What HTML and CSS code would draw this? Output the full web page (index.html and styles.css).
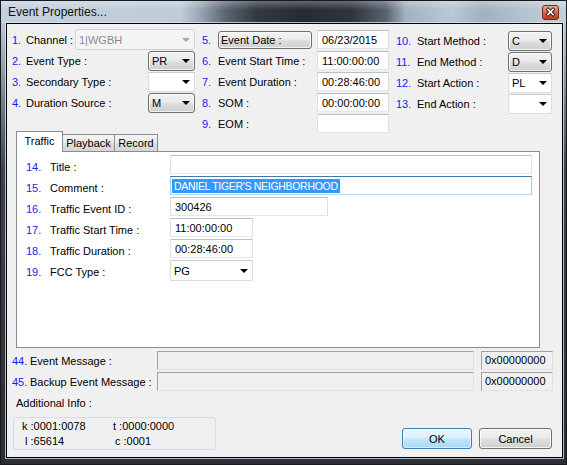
FILE: index.html
```html
<!DOCTYPE html>
<html>
<head>
<meta charset="utf-8">
<title>Event Properties</title>
<link rel="stylesheet" href="styles.css">
</head>
<body>
<div class="window">
  <div class="titlebar">
    <span class="title">Event Properties...</span>
    <span class="close">
      <svg width="17" height="15" viewBox="0 0 17 15">
        <defs>
          <linearGradient id="cg" x1="0" y1="0" x2="0" y2="1">
            <stop offset="0" stop-color="#eeb2a2"/>
            <stop offset="0.45" stop-color="#d96d52"/>
            <stop offset="1" stop-color="#c2391a"/>
          </linearGradient>
        </defs>
        <rect x="0.5" y="0.5" width="16" height="14" rx="2.5" fill="url(#cg)" stroke="#6e2c1e"/>
        <path d="M6 4.5l5 5M11 4.5l-5 5" stroke="#3b1a12" stroke-width="3.4" stroke-linecap="square"/>
        <path d="M6 4.5l5 5M11 4.5l-5 5" stroke="#ffffff" stroke-width="1.6" stroke-linecap="square"/>
      </svg>
    </span>
  </div>
  <div class="frame">
    <div class="client">
      <div class="top">
        <div class="col col1">
          <div class="row"><span class="num">1.</span><span class="lbl">Channel :</span><div class="combo disabled w120 h21"><span class="val">1|WGBH</span><span class="arrow"></span></div></div>
          <div class="row"><span class="num">2.</span><span class="lbl">Event Type :</span><div class="combo raised w47"><span class="val">PR</span><span class="arrow"></span></div></div>
          <div class="row"><span class="num">3.</span><span class="lbl">Secondary Type :</span><div class="combo flat w47"><span class="val"></span><span class="arrow"></span></div></div>
          <div class="row"><span class="num">4.</span><span class="lbl">Duration Source :</span><div class="combo raised w47"><span class="val">M</span><span class="arrow"></span></div></div>
        </div>
        <div class="col col2">
          <div class="row"><span class="num">5.</span><span class="button datebtn">Event Date :</span><span class="textbox w72">06/23/2015</span></div>
          <div class="row"><span class="num">6.</span><span class="lbl">Event Start Time :</span><span class="textbox w72">11:00:00:00</span></div>
          <div class="row"><span class="num">7.</span><span class="lbl">Event Duration :</span><span class="textbox w72">00:28:46:00</span></div>
          <div class="row"><span class="num">8.</span><span class="lbl">SOM :</span><span class="textbox w72">00:00:00:00</span></div>
          <div class="row"><span class="num">9.</span><span class="lbl">EOM :</span><span class="textbox w72"></span></div>
        </div>
        <div class="col col3">
          <div class="row"><span class="num">10.</span><span class="lbl">Start Method :</span><div class="combo raised w44"><span class="val">C</span><span class="arrow"></span></div></div>
          <div class="row"><span class="num">11.</span><span class="lbl">End Method :</span><div class="combo raised w44"><span class="val">D</span><span class="arrow"></span></div></div>
          <div class="row"><span class="num">12.</span><span class="lbl">Start Action :</span><div class="combo flat w44"><span class="val">PL</span><span class="arrow"></span></div></div>
          <div class="row"><span class="num">13.</span><span class="lbl">End Action :</span><div class="combo flat w44"><span class="val"></span><span class="arrow"></span></div></div>
        </div>
      </div>

      <div class="tabs">
        <span class="tab active t-traffic">Traffic</span>
        <span class="tab t-playback">Playback</span>
        <span class="tab t-record">Record</span>
      </div>
      <div class="panel">
        <div class="prow"><span class="num">14.</span><span class="lbl">Title :</span><span class="textbox wide h20"></span></div>
        <div class="prow"><span class="num">15.</span><span class="lbl">Comment :</span><span class="textbox wide h20 focused"><span class="sel">DANIEL TIGER'S NEIGHBORHOOD</span></span></div>
        <div class="prow"><span class="num">16.</span><span class="lbl">Traffic Event ID :</span><span class="textbox w158 h20">300426</span></div>
        <div class="prow"><span class="num">17.</span><span class="lbl">Traffic Start Time :</span><span class="textbox w83 h20">11:00:00:00</span></div>
        <div class="prow"><span class="num">18.</span><span class="lbl">Traffic Duration :</span><span class="textbox w83 h20">00:28:46:00</span></div>
        <div class="prow"><span class="num">19.</span><span class="lbl">FCC Type :</span><div class="combo flat w83 h21"><span class="val">PG</span><span class="arrow"></span></div></div>
      </div>

      <div class="msgs">
        <div class="mrow"><span class="num">44.</span><span class="lbl">Event Message :</span><span class="static msgbox"></span><span class="static hex">0x00000000</span></div>
        <div class="mrow"><span class="num">45.</span><span class="lbl">Backup Event Message :</span><span class="static msgbox"></span><span class="static hex">0x00000000</span></div>
      </div>

      <div class="bottom">
        <div class="info">
          <div class="info-label">Additional Info :</div>
          <div class="info-box">
            <div class="irow"><span class="ik">k :0001:0078</span><span>t :0000:0000</span></div>
            <div class="irow"><span class="ik ik-l">l :65614</span><span class="ic">c :0001</span></div>
          </div>
        </div>
        <div class="btns">
          <span class="button okbtn">OK</span>
          <span class="button cancelbtn">Cancel</span>
        </div>
      </div>
    </div>
  </div>
</div>
</body>
</html>
```

FILE: styles.css
```css
* { box-sizing: border-box; }
html, body { margin: 0; padding: 0; }
body {
  width: 567px;
  height: 465px;
  overflow: hidden;
  font-family: "Liberation Sans", Arial, sans-serif;
  font-size: 11px;
  color: #000;
  background: #2a2e33;
}

.window {
  width: 567px;
  height: 465px;
  border: 1px solid #17191c;
  background: linear-gradient(to bottom, #c2cfdb 0, #b3c1ce 30px, #7d8894 90px, #3c4249 170px, #2b2f34 100%);
  display: flex;
  flex-direction: column;
}

.titlebar {
  height: 22px;
  flex-shrink: 0;
  display: flex;
  align-items: center;
  justify-content: space-between;
  padding: 0 7px 0 7px;
  background:
    linear-gradient(to bottom, rgba(255,255,255,0.28) 0, rgba(255,255,255,0) 9px),
    linear-gradient(to right, #c4d1dd 0, #bfccd8 180px, #97a4b1 200px, #5b6571 225px, #323942 255px, #262b33 300px, #2e343d 350px, #59636f 385px, #a4b2bf 405px, #bac8d5 450px, #a3b1bf 482px, #b4c2cf 520px, #c2cfdb 565px);
}
.title {
  font-family: "Liberation Sans", Arial, sans-serif;
  font-size: 12px;
  color: #111;
}
.close { display: flex; }

.frame {
  flex: 1;
  display: flex;
  padding: 0 3px 6px 5px;
}
.client {
  flex: 1;
  display: flex;
  flex-direction: column;
  border: 1px solid #000;
  box-shadow: 0 0 0 1px rgba(225, 232, 238, 0.75);
  background: #f0f0f0;
  padding-top: 5px;
}

.num { color: #1b1bf2; flex-shrink: 0; }
.lbl { white-space: nowrap; }

/* top section */
.top {
  display: flex;
  gap: 7px;
  height: 102px;
  padding-left: 5px;
  flex-shrink: 0;
}
.col { display: flex; flex-direction: column; }
.col1 { width: 183px; }
.col2 { width: 187px; }
.col3 { width: 156px; padding-top: 1px; }
.row {
  display: flex;
  align-items: center;
  height: 21px;
  flex-shrink: 0;
}
.col1 .num { width: 14px; }
.col2 .num { width: 16px; }
.col3 .num { width: 21px; }
.row > .combo, .row > .textbox { margin-left: auto; }

/* combos */
.combo {
  display: flex;
  align-items: center;
  justify-content: space-between;
  height: 20px;
  padding: 0 4px 0 3px;
  flex-shrink: 0;
}
.combo .arrow {
  width: 0;
  height: 0;
  border-left: 4px solid transparent;
  border-right: 4px solid transparent;
  border-top: 4px solid #000;
}
.raised {
  border: 1px solid #707070;
  border-radius: 3px;
  background: linear-gradient(to bottom, #f2f2f2 0, #ebebeb 45%, #dddddd 55%, #cfcfcf 100%);
  box-shadow: inset 0 0 0 1px rgba(255,255,255,0.7);
}
.flat {
  border: 1px solid #d9dde2;
  border-top-color: #c8ccd2;
  border-radius: 1px;
  background: #fff;
}
.disabled {
  border: 1px solid #cfd3d7;
  border-radius: 3px;
  background: #f4f4f4;
  color: #8a8a8a;
}
.disabled .arrow { border-top-color: #a8a8a8; }

.w120 { width: 120px; }
.w47 { width: 47px; }
.w44 { width: 44px; }
.w72 { width: 72px; }
.w83 { width: 83px; }
.w158 { width: 158px; }
.wide { width: 362px; }
.h21 { height: 21px; }
.h20 { height: 20px; }

/* text boxes */
.textbox {
  display: flex;
  align-items: center;
  height: 19px;
  padding: 0 4px;
  background: #fff;
  border: 1px solid;
  border-color: #bcc0c6 #dcdfe4 #e3e6ea #dcdfe4;
  white-space: nowrap;
  overflow: hidden;
  flex-shrink: 0;
}
.textbox.focused {
  border-color: #3d7bad #a4c9e3 #b7d9ed #a4c9e3;
  padding-left: 1px;
}
.sel {
  background: #3399ff;
  color: #fff;
  line-height: 14px;
  padding: 0 2px;
  font-size: 10.5px;
  letter-spacing: -0.3px;
}

/* buttons */
.button {
  display: flex;
  align-items: center;
  justify-content: center;
  border: 1px solid #707070;
  border-radius: 3px;
  background: linear-gradient(to bottom, #f2f2f2 0, #ebebeb 45%, #dddddd 55%, #cfcfcf 100%);
  box-shadow: inset 0 0 0 1px rgba(252,252,252,0.8);
  white-space: nowrap;
  flex-shrink: 0;
}
.datebtn {
  width: 94px;
  height: 18px;
  justify-content: flex-start;
  padding-left: 2px;
}
.okbtn {
  width: 70px;
  height: 21px;
  border-color: #3c7fb1;
  background: linear-gradient(to bottom, #eaf6fd 0, #d9f0fc 45%, #bee6fd 55%, #a7d9f5 100%);
  box-shadow: inset 0 0 0 1px rgba(255,255,255,0.55);
}
.cancelbtn {
  width: 73px;
  height: 21px;
}

/* tabs */
.tabs {
  display: flex;
  align-items: flex-end;
  height: 20px;
  padding-left: 9px;
  position: relative;
  z-index: 1;
  flex-shrink: 0;
}
.tab {
  height: 17px;
  display: flex;
  align-items: center;
  justify-content: center;
  border: 1px solid #898c95;
  border-bottom: none;
  margin-left: -1px;
  background: linear-gradient(to bottom, #f3f3f3 0, #ebebeb 50%, #dedede 51%, #d6d6d6 100%);
}
.tab.active {
  height: 21px;
  margin-bottom: -1px;
  margin-left: 0;
  background: #fff;
  position: relative;
  z-index: 2;
  padding-bottom: 2px;
}
.t-traffic { width: 47px; }
.t-playback { width: 53px; }
.t-record { width: 44px; }

.panel {
  margin-left: 9px;
  width: 524px;
  height: 197px;
  flex-shrink: 0;
  border: 1px solid #898c95;
  background: #fff;
  padding: 3px 0 0 9px;
}
.prow {
  display: flex;
  align-items: flex-start;
  height: 21px;
}
.prow .num, .prow .lbl {
  line-height: 14px;
  padding-top: 5px;
}
.prow .num { width: 24px; }
.prow .lbl { width: 120px; }

/* messages */
.msgs {
  padding: 3px 0 0 5px;
  flex-shrink: 0;
}
.mrow {
  display: flex;
  align-items: flex-start;
  height: 21px;
}
.mrow .num, .mrow .lbl { line-height: 20px; }
.mrow .num { width: 18px; }
.mrow .lbl { width: 127px; }
.static {
  height: 19px;
  border: 1px solid;
  border-color: #a0a0a0 #e2e2e2 #e2e2e2 #a0a0a0;
  flex-shrink: 0;
}
.msgbox { width: 317px; }
.hex {
  width: 72px;
  margin-left: 7px;
  padding-left: 3px;
  line-height: 17px;
}

/* bottom */
.bottom {
  display: flex;
  justify-content: space-between;
  align-items: flex-end;
  padding: 0 10px 0 6px;
  flex-shrink: 0;
}
.info { display: flex; flex-direction: column; }
.info-label {
  padding-left: 3px;
  margin-top: 3px;
  line-height: 14px;
}
.info-box {
  margin-top: 7px;
  width: 203px;
  height: 33px;
  border: 1px solid #d3dde4;
  border-radius: 3px;
  padding: 1px 0 0 8px;
}
.irow { display: flex; line-height: 15px; white-space: nowrap; }
.ik { width: 91px; }
.ik-l { padding-left: 3px; }
.ic { padding-left: 2px; }
.btns {
  display: flex;
  gap: 7px;
  margin-bottom: 1px;
}
```
